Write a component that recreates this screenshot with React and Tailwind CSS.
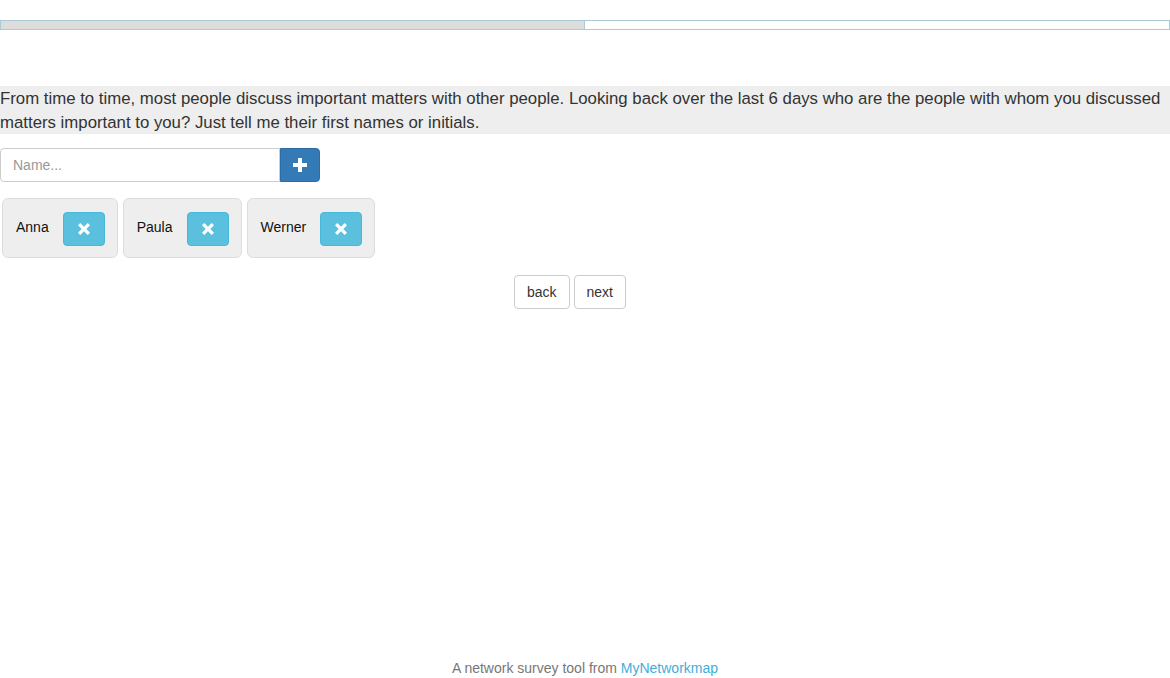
import React, { useState } from 'react';

const PlusIcon = () => (
  <svg width="14" height="14" viewBox="0 0 14 14" fill="white">
    <path d="M5 0h4v5h5v4H9v5H5V9H0V5h5z" />
  </svg>
);

const CrossIcon = () => (
  <svg width="12" height="12" viewBox="0 0 12 12" fill="white">
    <path d="M2.3 0L6 3.7 9.7 0 12 2.3 8.3 6 12 9.7 9.7 12 6 8.3 2.3 12 0 9.7 3.7 6 0 2.3z" />
  </svg>
);

const App = () => {
  const [names, setNames] = useState(['Anna', 'Paula', 'Werner']);
  const [value, setValue] = useState('');

  const addName = () => {
    if (value.trim()) {
      setNames([...names, value.trim()]);
      setValue('');
    }
  };

  return (
    <div
      className="min-h-screen flex flex-col bg-white text-[#333]"
      style={{ fontFamily: '"Liberation Sans", Arial, sans-serif' }}
    >
      {/* progress */}
      <div className="mt-5 h-[10px] w-full border border-[#a9cbd3] flex">
        <div className="w-1/2 h-full bg-[#dddddd] border-r border-[#a9cbd3]"></div>
      </div>

      {/* question */}
      <div className="mt-[56px] pt-[1px] h-[48px] bg-[#eeeeee] text-[16.8px] leading-[24px] text-[#333]">
        From time to time, most people discuss important matters with other people. Looking back over the last 6 days who are the people with whom you discussed matters important to you? Just tell me their first names or initials.
      </div>

      {/* input */}
      <div className="mt-[14px] flex">
        <input
          value={value}
          onChange={(e) => setValue(e.target.value)}
          placeholder="Name..."
          className="w-[280px] h-[34px] px-3 text-[14px] border border-[#ccc] rounded-l-[4px] outline-none placeholder:text-[#999] text-[#555]"
        />
        <button
          onClick={addName}
          className="w-[40px] h-[34px] bg-[#337ab7] border border-[#2e6da4] rounded-r-[4px] flex items-center justify-center"
        >
          <PlusIcon />
        </button>
      </div>

      {/* names */}
      <div className="mt-4 ml-[2px] flex gap-[5px]">
        {names.map((n, i) => (
          <div
            key={i}
            className="h-[60px] flex items-start bg-[#eeeeee] border border-[#dddddd] rounded-[6px] pl-[13px] pr-[12px] pt-[13px] gap-[14px] text-[14px] text-[#111]"
          >
            <span className="leading-[30px]">{n}</span>
            <button
              onClick={() => setNames(names.filter((_, j) => j !== i))}
              className="w-[42px] h-[34px] bg-[#5bc0de] border border-[#46b8da] rounded-[4px] flex items-center justify-center"
            >
              <CrossIcon />
            </button>
          </div>
        ))}
      </div>

      {/* nav */}
      <div className="mt-[17px] pr-[30px] flex justify-center gap-1">
        <button className="h-[34px] px-3 border border-[#ccc] rounded-[4px] text-[14px] text-[#333] bg-white">
          back
        </button>
        <button className="h-[34px] px-3 border border-[#ccc] rounded-[4px] text-[14px] text-[#333] bg-white">
          next
        </button>
      </div>

      {/* footer */}
      <div className="mt-auto h-[20px] leading-[20px] text-center text-[14px] text-[#777]">
        A network survey tool from <a className="text-[#42aed9]">MyNetworkmap</a>
      </div>
    </div>
  );
};

export default App;
